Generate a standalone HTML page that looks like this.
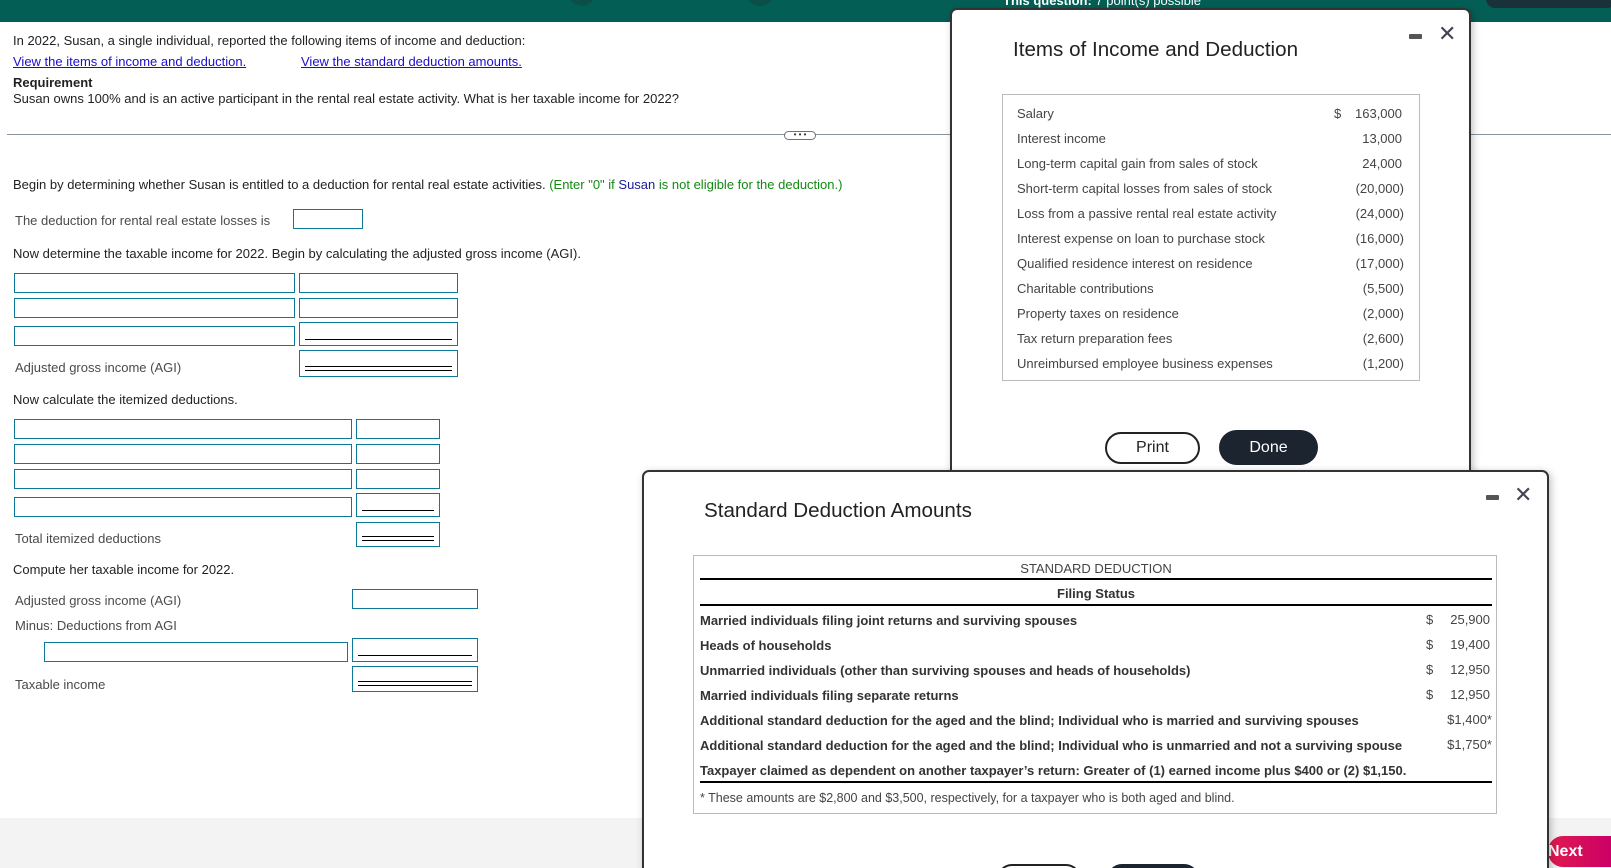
<!DOCTYPE html>
<html style="width:1611px;height:868px;overflow:hidden"><head><meta charset="utf-8"><style>
*{box-sizing:border-box;margin:0;padding:0}
body{width:1611px;height:868px;overflow:hidden;position:relative;background:#fff;font-family:"Liberation Sans",sans-serif;font-size:13px;color:#222}
.a{position:absolute;white-space:nowrap}
.in{position:absolute;border:1px solid #0b7a99;background:#fff}
.u::after{content:"";position:absolute;left:5px;right:5px;bottom:5px;border-bottom:1px solid #000}
.dd::after{content:"";position:absolute;left:5px;right:5px;bottom:5px;height:3px;border-top:1px solid #000;border-bottom:1px solid #000}
.lbl{color:#4a4a4a}
.modal{position:absolute;background:#fff;border:2px solid #333;border-radius:7px;box-shadow:2px 2px 8px rgba(0,0,0,.25)}
.mt{color:#222;font-size:20.6px}
.r{position:absolute;font-size:13px;color:#444}
.b{font-weight:bold;color:#333}
</style></head><body>
<div class="a" style="left:0;top:0;width:1611px;height:22px;background:#035f55"></div>
<div class="a" style="left:568px;top:-22px;width:28px;height:28px;border-radius:50%;background:#0c4f49"></div>
<div class="a" style="left:746px;top:-22px;width:28px;height:28px;border-radius:50%;background:#0c4f49"></div>
<div class="a" style="left:1003px;top:-7px;color:#fff;font-size:13px"><b>This question:</b> 7 point(s) possible</div>
<div class="a" style="left:1486px;top:-10px;width:130px;height:18px;border-radius:9px;background:#18313a"></div>

<div class="a" style="left:13px;top:33px">In 2022, Susan, a single individual, reported the following items of income and deduction:</div>
<div class="a" style="left:13px;top:54px;color:#1a0dcc;text-decoration:underline">View the items of income and deduction.</div>
<div class="a" style="left:301px;top:54px;color:#1a0dcc;text-decoration:underline">View the standard deduction amounts.</div>
<div class="a" style="left:13px;top:75px;font-weight:bold">Requirement</div>
<div class="a" style="left:13px;top:91px">Susan owns 100% and is an active participant in the rental real estate activity. What is her taxable income for 2022?</div>
<div class="a" style="left:7px;top:134px;width:1604px;height:1px;background:#8a93a0"></div>
<div class="a" style="left:784px;top:131px;width:32px;height:9px;border:1px solid #6a7280;border-radius:5px;background:#fff;font-size:8px;line-height:5px;text-align:center;color:#333">• • •</div>

<div class="a" style="left:13px;top:177px">Begin by determining whether Susan is entitled to a deduction for rental real estate activities. <span style="color:#138a13">(Enter "0" if <span style="color:#1a1a99">Susan</span> is not eligible for the deduction.)</span></div>
<div class="a lbl" style="left:15px;top:213px">The deduction for rental real estate losses is</div>
<div class="in" style="left:293px;top:209px;width:70px;height:20px"></div>
<div class="a" style="left:13px;top:246px">Now determine the taxable income for 2022. Begin by calculating the adjusted gross income (AGI).</div>
<div class="in" style="left:14px;top:273px;width:281px;height:20px"></div><div class="in" style="left:299px;top:273px;width:159px;height:20px"></div>
<div class="in" style="left:14px;top:298px;width:281px;height:20px"></div><div class="in" style="left:299px;top:298px;width:159px;height:20px"></div>
<div class="in" style="left:14px;top:326px;width:281px;height:20px"></div><div class="in u" style="left:299px;top:322px;width:159px;height:24px"></div>
<div class="a lbl" style="left:15px;top:360px">Adjusted gross income (AGI)</div>
<div class="in dd" style="left:299px;top:350px;width:159px;height:27px"></div>
<div class="a" style="left:13px;top:392px">Now calculate the itemized deductions.</div>
<div class="in" style="left:14px;top:419px;width:338px;height:20px"></div><div class="in" style="left:356px;top:419px;width:84px;height:20px"></div>
<div class="in" style="left:14px;top:444px;width:338px;height:20px"></div><div class="in" style="left:356px;top:444px;width:84px;height:20px"></div>
<div class="in" style="left:14px;top:469px;width:338px;height:20px"></div><div class="in" style="left:356px;top:469px;width:84px;height:20px"></div>
<div class="in" style="left:14px;top:497px;width:338px;height:20px"></div><div class="in u" style="left:356px;top:493px;width:84px;height:24px"></div>
<div class="a lbl" style="left:15px;top:531px">Total itemized deductions</div>
<div class="in dd" style="left:356px;top:522px;width:84px;height:25px"></div>
<div class="a" style="left:13px;top:562px">Compute her taxable income for 2022.</div>
<div class="a lbl" style="left:15px;top:593px">Adjusted gross income (AGI)</div>
<div class="in" style="left:352px;top:589px;width:126px;height:20px"></div>
<div class="a lbl" style="left:15px;top:618px">Minus: Deductions from AGI</div>
<div class="in" style="left:44px;top:642px;width:304px;height:20px"></div><div class="in u" style="left:352px;top:638px;width:126px;height:24px"></div>
<div class="a lbl" style="left:15px;top:677px">Taxable income</div>
<div class="in dd" style="left:352px;top:666px;width:126px;height:26px"></div>

<div class="a" style="left:0;top:818px;width:645px;height:50px;background:#f3f3f3"></div>
<div class="a" style="left:1549px;top:818px;width:62px;height:50px;background:#f3f3f3"></div>
<div class="a" style="left:1548px;top:836px;width:63px;height:31px;border-radius:15px 0 0 15px;background:linear-gradient(90deg,#e01a4f,#cc0066);color:#fff;font-weight:bold;font-size:16px;line-height:31px">Next</div>

<!-- modal 1 -->
<div class="modal" style="left:950px;top:8px;width:521px;height:520px">
  <div class="a mt" style="left:61px;top:28px">Items of Income and Deduction</div>
  <div class="a" style="left:457px;top:24px;width:13px;height:5px;background:#555;border-radius:1px"></div>
  <div class="a" style="left:486px;top:11px;font-size:22px;color:#445">✕</div>
  <div class="a" style="left:50px;top:84px;width:418px;height:287px;border:1px solid #bbb"></div>
  <div class="r" style="left:65px;top:96px">Salary</div><div class="r" style="left:382px;top:96px">$</div><div class="r" style="left:364px;top:96px;width:86px;text-align:right">163,000</div>
  <div class="r" style="left:65px;top:121px">Interest income</div><div class="r" style="left:364px;top:121px;width:86px;text-align:right">13,000</div>
  <div class="r" style="left:65px;top:146px">Long-term capital gain from sales of stock</div><div class="r" style="left:364px;top:146px;width:86px;text-align:right">24,000</div>
  <div class="r" style="left:65px;top:171px">Short-term capital losses from sales of stock</div><div class="r" style="left:366px;top:171px;width:86px;text-align:right">(20,000)</div>
  <div class="r" style="left:65px;top:196px">Loss from a passive rental real estate activity</div><div class="r" style="left:366px;top:196px;width:86px;text-align:right">(24,000)</div>
  <div class="r" style="left:65px;top:221px">Interest expense on loan to purchase stock</div><div class="r" style="left:366px;top:221px;width:86px;text-align:right">(16,000)</div>
  <div class="r" style="left:65px;top:246px">Qualified residence interest on residence</div><div class="r" style="left:366px;top:246px;width:86px;text-align:right">(17,000)</div>
  <div class="r" style="left:65px;top:271px">Charitable contributions</div><div class="r" style="left:366px;top:271px;width:86px;text-align:right">(5,500)</div>
  <div class="r" style="left:65px;top:296px">Property taxes on residence</div><div class="r" style="left:366px;top:296px;width:86px;text-align:right">(2,000)</div>
  <div class="r" style="left:65px;top:321px">Tax return preparation fees</div><div class="r" style="left:366px;top:321px;width:86px;text-align:right">(2,600)</div>
  <div class="r" style="left:65px;top:346px">Unreimbursed employee business expenses</div><div class="r" style="left:366px;top:346px;width:86px;text-align:right">(1,200)</div>
  <div class="a" style="left:153px;top:422px;width:95px;height:32px;border:2px solid #222;border-radius:16px;text-align:center;line-height:28px;font-size:16px;color:#222">Print</div>
  <div class="a" style="left:267px;top:420px;width:99px;height:35px;background:#1c2430;border-radius:18px;text-align:center;line-height:35px;font-size:16px;color:#fff">Done</div>
</div>

<!-- modal 2 -->
<div class="modal" style="left:642px;top:470px;width:907px;height:410px">
  <div class="a mt" style="left:60px;top:27px">Standard Deduction Amounts</div>
  <div class="a" style="left:842px;top:23px;width:13px;height:5px;background:#555;border-radius:1px"></div>
  <div class="a" style="left:870px;top:10px;font-size:22px;color:#445">✕</div>
  <div class="a" style="left:49px;top:83px;width:804px;height:259px;border:1px solid #bbb"></div>
  <div class="a" style="left:56px;top:89px;width:792px;text-align:center;font-size:13px;color:#444">STANDARD DEDUCTION</div>
  <div class="a" style="left:56px;top:106px;width:792px;height:2px;background:#000"></div>
  <div class="a b" style="left:56px;top:114px;width:792px;text-align:center;font-size:13px">Filing Status</div>
  <div class="a" style="left:56px;top:132px;width:792px;height:2px;background:#000"></div>
  <div class="r b" style="left:56px;top:141px">Married individuals filing joint returns and surviving spouses</div>
  <div class="r b" style="left:56px;top:166px">Heads of households</div>
  <div class="r b" style="left:56px;top:191px">Unmarried individuals (other than surviving spouses and heads of households)</div>
  <div class="r b" style="left:56px;top:216px">Married individuals filing separate returns</div>
  <div class="r b" style="left:56px;top:241px">Additional standard deduction for the aged and the blind; Individual who is married and surviving spouses</div>
  <div class="r b" style="left:56px;top:266px">Additional standard deduction for the aged and the blind; Individual who is unmarried and not a surviving spouse</div>
  <div class="r b" style="left:56px;top:291px">Taxpayer claimed as dependent on another taxpayer’s return: Greater of (1) earned income plus $400 or (2) $1,150.</div>
  <div class="r" style="left:782px;top:140px">$</div><div class="r" style="left:766px;top:140px;width:80px;text-align:right">25,900</div>
  <div class="r" style="left:782px;top:165px">$</div><div class="r" style="left:766px;top:165px;width:80px;text-align:right">19,400</div>
  <div class="r" style="left:782px;top:190px">$</div><div class="r" style="left:766px;top:190px;width:80px;text-align:right">12,950</div>
  <div class="r" style="left:782px;top:215px">$</div><div class="r" style="left:766px;top:215px;width:80px;text-align:right">12,950</div>
  <div class="r" style="left:766px;top:240px;width:82px;text-align:right">$1,400*</div>
  <div class="r" style="left:766px;top:265px;width:82px;text-align:right">$1,750*</div>
  <div class="a" style="left:56px;top:309px;width:792px;height:2px;background:#000"></div>
  <div class="r" style="left:56px;top:319px;font-size:12.5px">* These amounts are $2,800 and $3,500, respectively, for a taxpayer who is both aged and blind.</div>
  <div class="a" style="left:353px;top:392px;width:84px;height:30px;border:2px solid #222;border-radius:15px"></div>
  <div class="a" style="left:463px;top:392px;width:92px;height:30px;background:#1c2430;border-radius:15px"></div>
</div>
</body></html>
